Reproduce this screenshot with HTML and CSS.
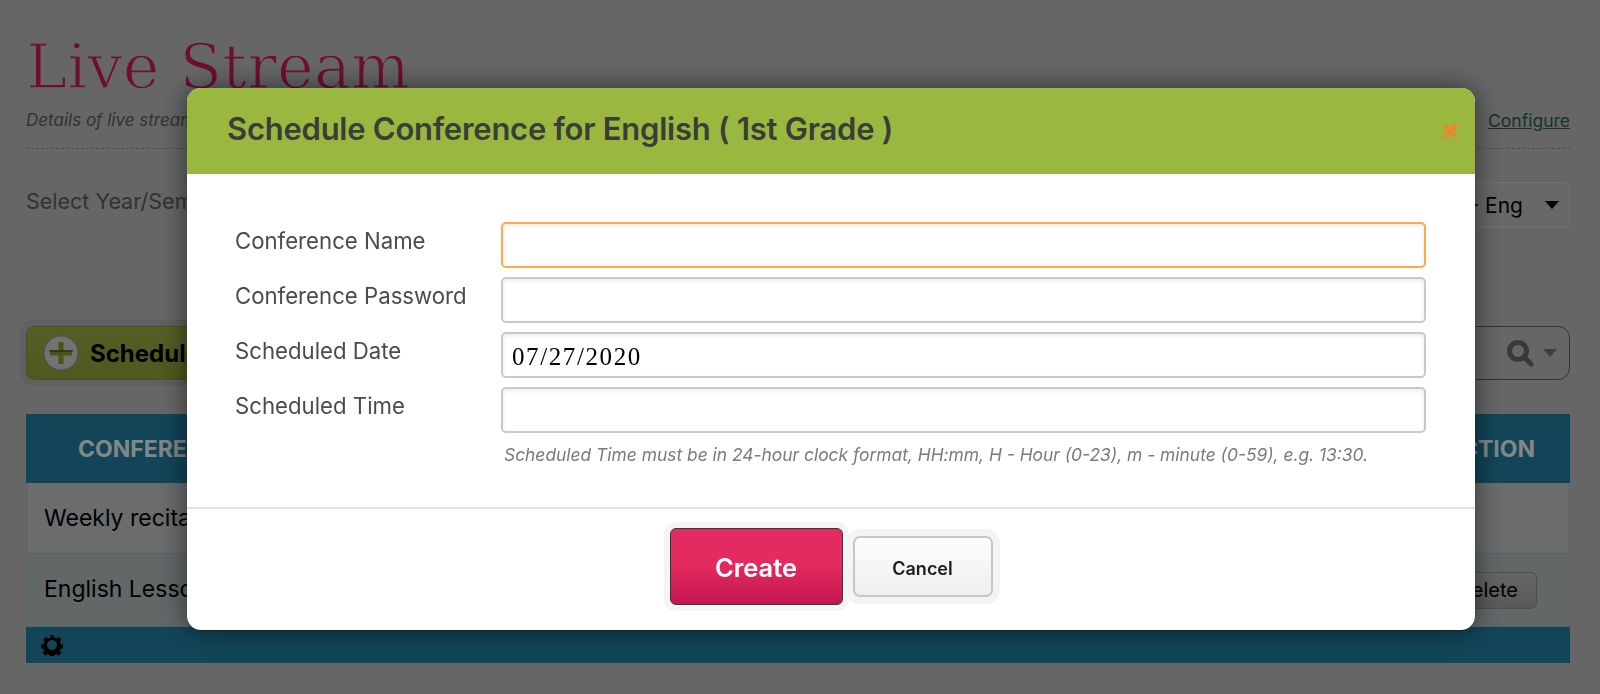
FILE: index.html
```html
<!DOCTYPE html>
<html lang="en">
<head>
<meta charset="utf-8">
<title>Live Stream</title>
<link rel="stylesheet" href="styles.css">
</head>
<body>
<main class="page">
  <header class="page-head">
    <h1 class="page-title">Live Stream</h1>
    <div class="page-sub">
      <em>Details of live stream conferences</em>
      <a class="config-link" href="#">Configure</a>
    </div>
  </header>
  <div class="term-row">
    <span class="term-label">Select Year/Semester</span>
    <div class="term-select"><span>1st Grade - Eng</span><i class="caret caret-black"></i></div>
  </div>
  <div class="tool-row">
    <button class="schedule-btn" type="button">
      <svg class="plus-icon" viewBox="0 0 36 36" width="36" height="36" aria-hidden="true">
        <circle cx="18" cy="18" r="17" fill="#aaa" stroke="#777" stroke-width="1"/>
        <path d="M18 7v22" stroke="#6f7f20" stroke-width="5"/>
        <path d="M7 18h22" stroke="#6f7f20" stroke-width="5"/>
        <path d="M6 16h24" stroke="#222" stroke-width="1"/>
      </svg>
      <span>Schedule Conference</span>
    </button>
    <div class="search-box">
      <svg class="search-icon" viewBox="0 0 28 28" width="28" height="28" aria-hidden="true">
        <circle cx="12" cy="12" r="8.5" fill="none" stroke="#555" stroke-width="5"/>
        <path d="M18 18l7 7" stroke="#555" stroke-width="5" stroke-linecap="round"/>
      </svg>
      <i class="caret caret-grey"></i>
    </div>
  </div>
  <section class="table">
    <div class="t-row t-head"><span>CONFERENCE NAME</span><span class="t-action">ACTION</span></div>
    <div class="t-row t-body"><span>Weekly recitation</span></div>
    <div class="t-row t-body t-alt"><span>English Lesson</span><button class="delete-btn" type="button">Delete</button></div>
    <div class="t-foot">
      <svg viewBox="0 0 24 24" width="22" height="22" aria-hidden="true">
        <path fill="#000" fill-rule="evenodd" d="M10 1h4l.6 3 2.2.9 2.6-1.7 2.8 2.8-1.7 2.6.9 2.2 3 .6v4l-3 .6-.9 2.2 1.7 2.6-2.8 2.8-2.6-1.7-2.2.9-.6 3h-4l-.6-3-2.2-.9-2.6 1.7-2.8-2.8 1.7-2.6-.9-2.2-3-.6v-4l3-.6.9-2.2L2.8 6l2.8-2.8 2.6 1.7 2.2-.9zM12 6.500a5.500 5.500 0 1 0 0 11 5.500 5.500 0 0 0 0-11z"/>
      </svg>
    </div>
  </section>
</main>

<div class="overlay"></div>
<div class="modal" role="dialog">
  <div class="modal-head">
    <h2 class="modal-title">Schedule Conference for English ( 1st Grade )</h2>
    <svg class="close-icon" viewBox="0 0 16 16" width="18" height="18" aria-hidden="true">
      <path d="M2.500 2.500l11 11M13.500 2.500l-11 11" stroke="#e8892f" stroke-width="4"/>
    </svg>
  </div>
  <form class="modal-form">
    <label class="f-label">Conference Name</label>
    <input class="f-input f-focus" type="text">
    <label class="f-label">Conference Password</label>
    <input class="f-input" type="text">
    <label class="f-label">Scheduled Date</label>
    <input class="f-input f-date" type="text" value="07/27/2020">
    <label class="f-label">Scheduled Time</label>
    <input class="f-input" type="text">
    <p class="f-hint">Scheduled Time must be in 24-hour clock format, HH:mm, H - Hour (0-23), m - minute (0-59), e.g. 13:30.</p>
  </form>
  <div class="modal-foot">
    <button class="btn-create" type="button">Create</button>
    <button class="btn-cancel" type="button">Cancel</button>
  </div>
</div>
</body>
</html>
```

FILE: styles.css
```css
* { box-sizing: border-box; }
html, body { height: 100%; }
body {
  margin: 0;
  background: #999;
  font-family: Inter, "Noto Sans", sans-serif;
  color: #4b4b4b;
  overflow: hidden;
}
.page { padding: 0 30px 0 26px; width: 1600px; }
.page-head {
  height: 149px;
  padding-top: 28px;
  border-bottom: 1px dashed #787878;
}
.page-title {
  margin: 0;
  font: 400 62px/78px "DejaVu Serif", serif;
  letter-spacing: .2px;
  color: #a51648;
  -webkit-text-stroke: 1.5px #999;
}
.page-sub {
  display: flex;
  justify-content: space-between;
  align-items: center;
  height: 28px;
  font-size: 17px;
}
.config-link { color: #1e4a4a; font-size: 17.5px; }
.term-row {
  display: flex;
  justify-content: space-between;
  align-items: center;
  margin-top: 33px;
  height: 46px;
  font-size: 21.5px;
}
.term-label { margin-top: -8px; }
.term-select {
  display: flex;
  align-items: center;
  gap: 22px;
  height: 46px;
  padding: 0 10px 0 14px;
  background: #9c9c9c;
  border: 1px solid #ababab;
  border-radius: 6px;
  color: #000;
  font-size: 21px;
}
.caret {
  display: block;
  width: 0;
  height: 0;
  border-style: solid;
  border-width: 8px 7.5px 0;
  border-color: #000 transparent transparent;
}
.caret-grey { border-color: #5f5f5f transparent transparent; }
.tool-row {
  display: flex;
  justify-content: space-between;
  align-items: center;
  margin-top: 98px;
  height: 54px;
}
.schedule-btn {
  display: flex;
  align-items: center;
  gap: 11px;
  height: 54px;
  padding: 0 16px;
  background: linear-gradient(#7f8e37, #76842f);
  border: 1px solid #6c7a2c;
  border-radius: 8px;
  box-shadow: 0 0 0 6px #8f8f8f;
  font: 700 24px Inter, sans-serif;
  color: #000;
}
.search-box {
  display: flex;
  align-items: center;
  justify-content: flex-end;
  gap: 9px;
  width: 300px;
  height: 54px;
  padding-right: 12px;
  border: 1.500px solid #4b4b4b;
  border-radius: 12px;
}
.table { margin-top: 34px; }
.t-row {
  display: flex;
  justify-content: space-between;
  align-items: center;
  padding: 0 32px 0 17px;
}
.t-head {
  height: 69px;
  background: #1b6883;
  color: #c3c9c9;
  font-size: 23px;
  font-weight: 700;
  padding: 0 35px 0 52px;
}
.t-body {
  height: 71px;
  background: #9ea1a4;
  color: #000;
  font-size: 23px;
  border: 1px solid #83939c;
  border-top: 0;
}
.t-alt { height: 73px; padding-bottom: 3px; background: #929a9c; }
.delete-btn {
  height: 37px;
  margin-top: 3px;
  padding: 0 18px;
  background: linear-gradient(#989898, #858585);
  border: 1px solid #777;
  border-radius: 6px;
  font: 400 20px Inter, sans-serif;
  color: #000;
}
.t-foot {
  display: flex;
  align-items: center;
  height: 36px;
  padding-left: 15px;
  background: #1b6883;
}
.overlay {
  position: fixed;
  inset: 0;
  background: rgba(0, 0, 0, .33);
}
.modal {
  position: fixed;
  left: 187px;
  top: 88px;
  width: 1288px;
  height: 542px;
  display: flex;
  flex-direction: column;
  background: #fff;
  border-radius: 14px;
  box-shadow: 0 0 28px rgba(0, 0, 0, .55), 0 1px 0 #1b3340;
  overflow: hidden;
}
.modal-head {
  display: flex;
  justify-content: space-between;
  align-items: center;
  height: 86px;
  flex: none;
  padding: 0 16px 6px 40px;
  background: #9ab83f;
}
.modal-title {
  margin: 0;
  font-size: 31px;
  font-weight: 600;
  color: #3a3d38;
  letter-spacing: -.25px;
}
.close-icon { margin-top: 6px; }
.modal-form {
  display: grid;
  grid-template-columns: 266px 925px;
  grid-auto-rows: 46px;
  row-gap: 9px;
  padding: 48px 0 0 48px;
  height: 335px;
  flex: none;
  border-bottom: 2px solid #e3e3e3;
}
.f-label {
  padding-top: 2px;
  font-size: 22.200px;
  line-height: 34px;
  color: #4b4b4b;
}
.f-input {
  width: 100%;
  height: 46px;
  padding: 0 9px;
  background: #fff;
  border: 2px solid #c9c9c9;
  border-radius: 5px;
  box-shadow: inset 0 2px 4px rgba(0, 0, 0, .08);
  outline: 0;
}
.f-focus { border-color: #ffa94a; }
.f-date {
  padding-top: 3px;
  font: 400 25px "Liberation Serif", serif;
  letter-spacing: 1.6px;
  color: #000;
}
.f-hint {
  grid-column: 2;
  margin: 0;
  padding: 2px 0 0 3px;
  font-size: 17.400px;
  font-style: italic;
  color: #7b7b7b;
  white-space: nowrap;
}
.modal-foot {
  flex: 1;
  display: flex;
  align-items: center;
  justify-content: center;
  gap: 10px;
  padding: 0 0 6px 0;
}
.btn-create {
  width: 173px;
  height: 77px;
  padding-top: 2px;
  background: linear-gradient(#e42b61 45%, #c4174e);
  border: 1px solid #243f44;
  border-radius: 6px;
  box-shadow: 0 0 0 6px #f4f4f4;
  font: 600 25.500px Inter, sans-serif;
  color: #fff;
}
.btn-cancel {
  width: 140px;
  height: 61px;
  padding-top: 4px;
  background: linear-gradient(#fcfcfc, #efefef);
  border: 2px solid #c6c6c6;
  border-radius: 7px;
  box-shadow: 0 0 0 7px #f4f4f4;
  font: 600 18px Inter, sans-serif;
  color: #1b1b1b;
}
```
